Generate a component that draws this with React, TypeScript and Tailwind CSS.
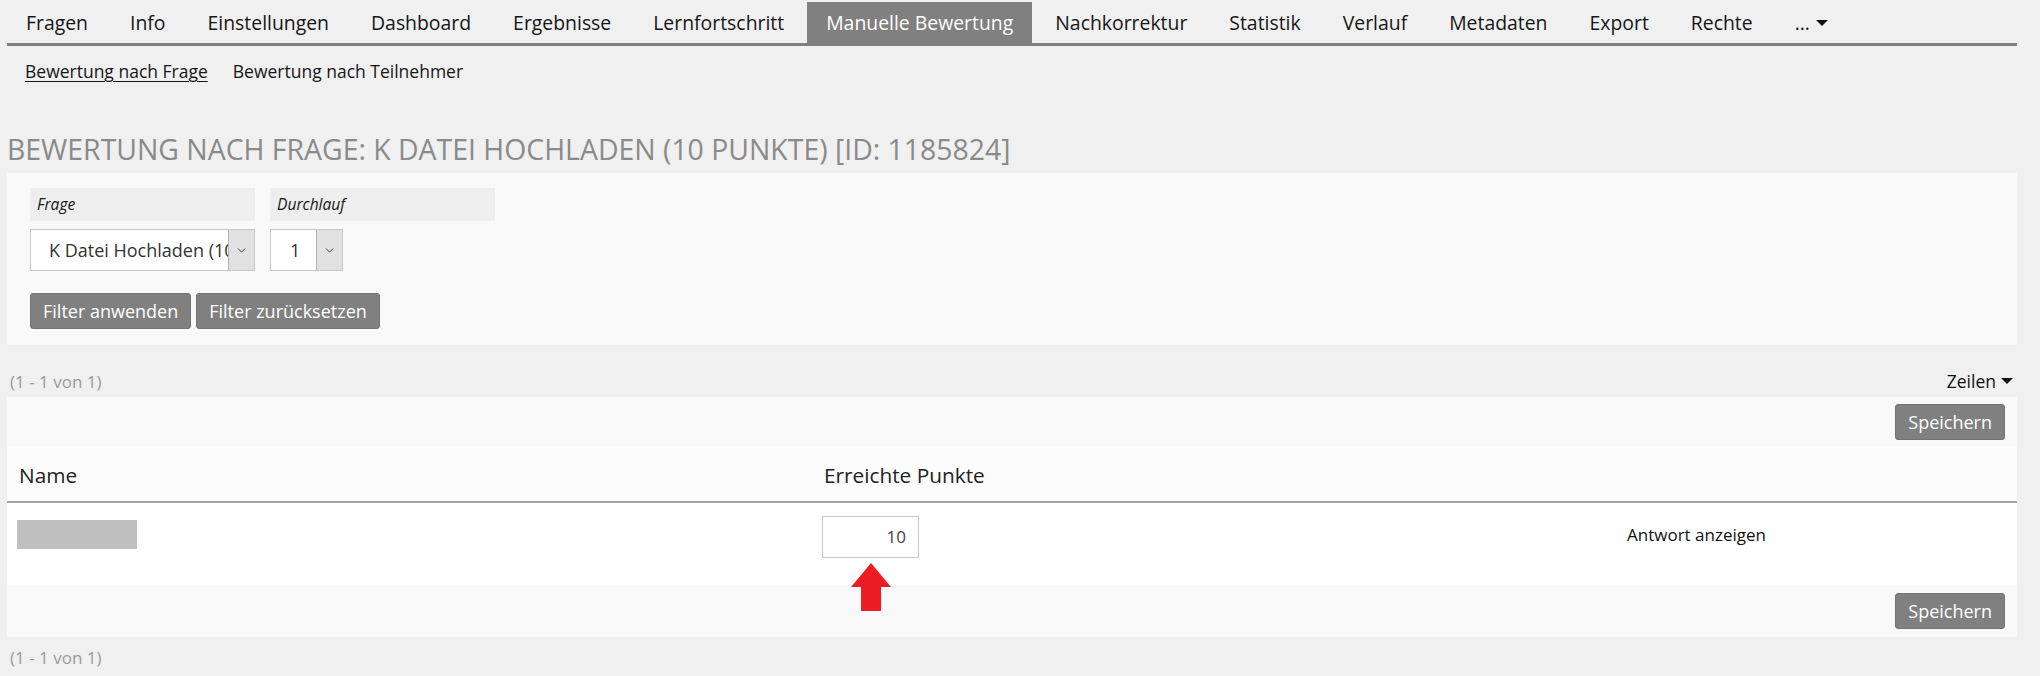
import { ChevronDown } from 'lucide-react';

const TABS = [
  'Fragen',
  'Info',
  'Einstellungen',
  'Dashboard',
  'Ergebnisse',
  'Lernfortschritt',
  'Manuelle Bewertung',
  'Nachkorrektur',
  'Statistik',
  'Verlauf',
  'Metadaten',
  'Export',
  'Rechte',
];

function Caret() {
  return <span className="inline-block w-0 h-0 border-l-[6px] border-r-[6px] border-t-[6px] border-l-transparent border-r-transparent border-t-[#111]" />;
}

function SelectBox({ value, width, textPad }: { value: string; width: string; textPad: string }) {
  return (
    <div className={`${width} h-[42px] flex bg-white border border-[#c8c8c8]`}>
      <div className={`flex-1 min-w-0 overflow-hidden whitespace-nowrap flex items-center text-[18px] text-[#333] ${textPad}`}>
        {value}
      </div>
      <div className="w-[26px] shrink-0 flex items-center justify-center bg-[#e1e1e1] border-l border-[#b4b4b4]">
        <ChevronDown className="w-[13px] h-[13px] text-[#333]" strokeWidth={1.8} />
      </div>
    </div>
  );
}

function GrayButton({ label }: { label: string }) {
  return (
    <button className="h-[36px] px-[12px] rounded-[3px] bg-[#808080] border border-[#737373] text-white text-[18px] leading-none">
      {label}
    </button>
  );
}

export default function App() {
  return (
    <div className="min-h-[676px] bg-[#f0f0f0] font-['Open_Sans',sans-serif] text-[#161616]">
      {/* main tabs */}
      <div className="pt-[2px] pl-[7px] pr-[23px]">
        <div className="flex gap-[4px] border-b-[3px] border-[#808080]">
          {TABS.map((t) => (
            <div
              key={t}
              className={
                t === 'Manuelle Bewertung'
                  ? 'h-[41px] px-[19px] flex items-center text-[19.4px] bg-[#808080] text-white'
                  : 'h-[41px] px-[19px] flex items-center text-[19.4px]'
              }
            >
              {t}
            </div>
          ))}
          <div className="h-[41px] px-[19px] flex items-center gap-[6px] text-[19.4px]">
            <span>...</span>
            <Caret />
          </div>
        </div>
      </div>

      {/* sub tabs */}
      <div className="h-[51px] pl-[25px] flex items-center gap-[25px] text-[17.5px]">
        <span className="underline underline-offset-[3px]">Bewertung nach Frage</span>
        <span>Bewertung nach Teilnehmer</span>
      </div>

      <div className="pl-[7px] pr-[23px]">
        <h1 className="mt-[33px] mb-[5px] text-[28.4px] leading-[38px] text-[#8a8a8a] whitespace-nowrap">
          BEWERTUNG NACH FRAGE: K DATEI HOCHLADEN (10 PUNKTE) [ID: 1185824]
        </h1>

        {/* filter */}
        <div className="h-[172px] bg-[#f9f9f9] pt-[15px] pl-[23px]">
          <div className="flex gap-[15px]">
            <div className="flex flex-col gap-[8px]">
              <div className="w-[225px] h-[33px] bg-[#eeeeee] pl-[7px] flex items-center italic text-[15.6px]">Frage</div>
              <SelectBox value="K Datei Hochladen (10 Punkte)" width="w-[225px]" textPad="pl-[18px]" />
            </div>
            <div className="flex flex-col gap-[8px]">
              <div className="w-[225px] h-[33px] bg-[#eeeeee] pl-[7px] flex items-center italic text-[15.6px]">Durchlauf</div>
              <SelectBox value="1" width="w-[73px]" textPad="pl-[19px]" />
            </div>
          </div>
          <div className="mt-[22px] flex gap-[5px]">
            <GrayButton label="Filter anwenden" />
            <GrayButton label="Filter zurücksetzen" />
          </div>
        </div>

        <div className="h-[52px] flex items-end justify-between pb-[3px]">
          <span className="pl-[3px] text-[17px] text-[#9a9a9a]">(1 - 1 von 1)</span>
          <span className="pr-[4px] flex items-center gap-[5px] text-[17.5px] text-[#111]">
            Zeilen <Caret />
          </span>
        </div>

        {/* table */}
        <div className="bg-[#f9f9f9]">
          <div className="h-[50px] flex items-center justify-end pr-[12px]">
            <GrayButton label="Speichern" />
          </div>
          <div className="h-[56px] pt-[4px] grid grid-cols-[805px_803px_1fr] items-center bg-[#fcfcfc] border-b-2 border-[#a3a3a3] text-[20.8px] text-[#222]">
            <div className="pl-[12px]">Name</div>
            <div className="pl-[12px]">Erreichte Punkte</div>
            <div />
          </div>
          <div className="h-[82px] grid grid-cols-[805px_803px_1fr] bg-white">
            <div className="pl-[10px] pt-[17px]">
              <div className="w-[120px] h-[29px] bg-[#c0c0c0]" />
            </div>
            <div className="pl-[10px] pt-[13px] relative">
              <div className="w-[97px] h-[42px] bg-white border border-[#c8c8c8] flex items-center justify-end pr-[12px] text-[17px] text-[#444]">
                10
              </div>
              <svg className="absolute left-[39px] top-[60px]" width="40" height="48" viewBox="0 0 40 48">
                <polygon points="20,0 40,24 30,24 30,48 10,48 10,24 0,24" fill="#ed1c24" />
              </svg>
            </div>
            <div className="pl-[12px] pt-[19px] text-[17px] text-[#111]">Antwort anzeigen</div>
          </div>
          <div className="h-[52px] flex items-center justify-end pr-[12px]">
            <GrayButton label="Speichern" />
          </div>
        </div>

        <div className="pt-[8px] pl-[3px] text-[17px] text-[#9a9a9a]">(1 - 1 von 1)</div>
      </div>
    </div>
  );
}
